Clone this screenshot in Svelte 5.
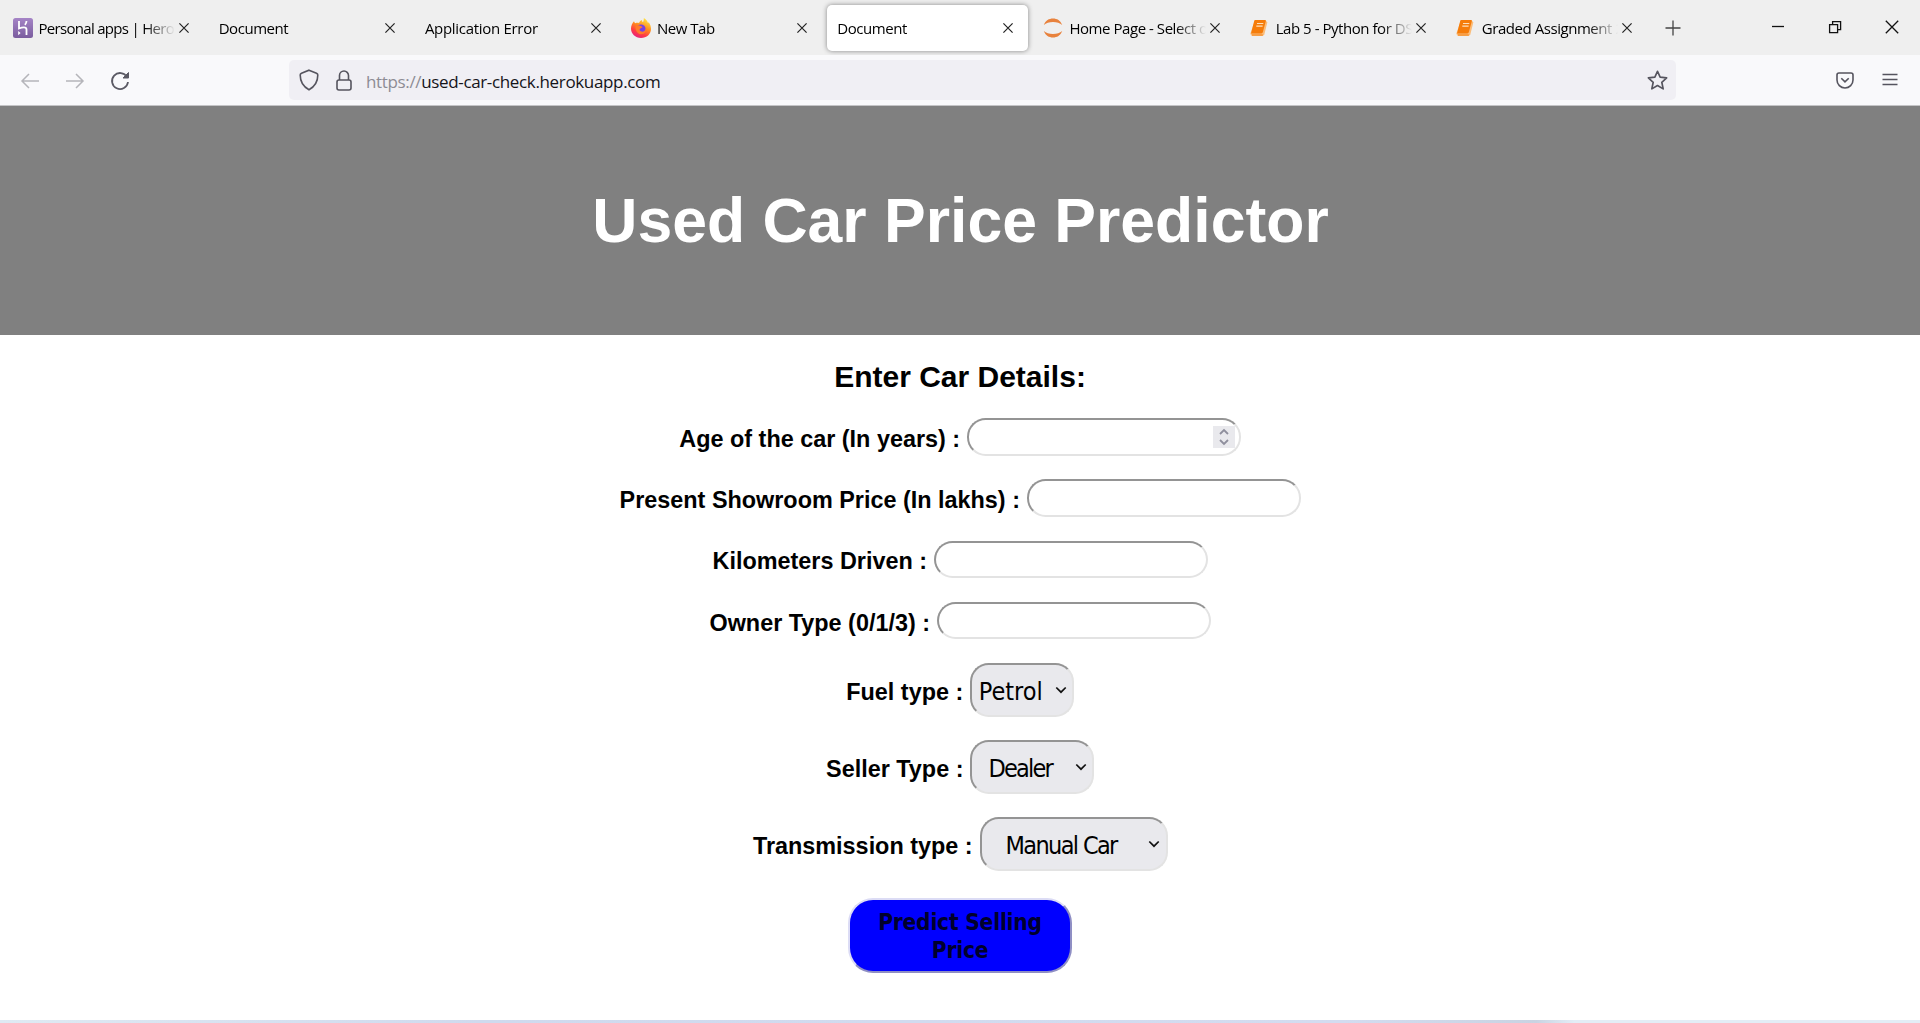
<script>
  const tabs = [
    { title: 'Personal apps | Heroku', icon: 'heroku', fit: 'tight' },
    { title: 'Document' },
    { title: 'Application Error', fit: 'loose' },
    { title: 'New Tab', icon: 'firefox', fit: 'wide' },
    { title: 'Document', active: true },
    { title: 'Home Page - Select or', icon: 'jupyter' },
    { title: 'Lab 5 - Python for DS', icon: 'book' },
    { title: 'Graded Assignment 2', icon: 'book' },
  ];

  const inputs = [
    { label: 'Age of the car (In years) :', spinner: true },
    { label: 'Present Showroom Price (In lakhs) :' },
    { label: 'Kilometers Driven :' },
    { label: 'Owner Type (0/1/3) :' },
  ];

  const selects = [
    { label: 'Fuel type :', value: 'Petrol', size: 'small' },
    { label: 'Seller Type :', value: 'Dealer', size: 'medium' },
    { label: 'Transmission type :', value: 'Manual Car', size: 'large' },
  ];
</script>

<div class="window">
  <div class="tabbar">
    <div class="tabs">
      {#each tabs as tab}
        <div class="tab" class:active={tab.active}>
          {#if tab.icon === 'heroku'}
            <svg class="fav" viewBox="0 0 20 20">
              <defs>
                <linearGradient id="hk" x1="0" y1="0" x2="0" y2="1">
                  <stop offset="0" stop-color="#a584c6" />
                  <stop offset="1" stop-color="#7a5c9e" />
                </linearGradient>
              </defs>
              <rect width="20" height="20" rx="2.5" fill="url(#hk)" />
              <path d="M6 3v7.500c3-1.200 7.500-2 7.500 1V17M13.500 3c0 1.700-.6 2.700-1.600 3.800" fill="none" stroke="#fff" stroke-width="1.800" />
              <path d="M5.200 13v4.200L7.600 15z" fill="#fff" />
            </svg>
          {:else if tab.icon === 'firefox'}
            <svg class="fav" viewBox="0 0 20 20">
              <defs>
                <linearGradient id="fx" x1=".8" y1="0" x2=".3" y2="1">
                  <stop offset="0" stop-color="#fff04a" />
                  <stop offset=".45" stop-color="#ff8a1f" />
                  <stop offset=".75" stop-color="#ff3b45" />
                  <stop offset="1" stop-color="#e5207f" />
                </linearGradient>
              </defs>
              <path d="M3 3.200c.2 1 .7 1.600 1.400 2C5.500 4.700 6.800 4.700 8 5c.5-1.500 1.700-2.600 3-3-.2 1 .2 1.600 1 2.200C12.600 2.800 13 1.500 12.800 0c2.200 1.300 3.600 3 4.200 5l.8-.7C19.300 6.500 20 8.500 20 11c0 5-4.300 9-10 9S0 15.800 0 10.600C0 7.600 1.300 5 3 3.200z" fill="url(#fx)" />
              <circle cx="10" cy="11" r="4.600" fill="#7542e5" />
              <path d="M4.500 8c2-1.200 4-1 5 0 1.300.4 2 .8 2 1.300-.6.900-2 .8-2.700 1.800-.6 1 .3 2.600 2.400 2.600 2 0 3.300-1.500 3.600-3.400 1 2.700-1 6-4.600 6C7 16.300 4 13 4.500 8z" fill="#ff7a2a" />
            </svg>
          {:else if tab.icon === 'jupyter'}
            <svg class="fav" viewBox="0 0 20 20">
              <path d="M.8 7C2.500 2.500 6 .5 10 .5S17.500 2.500 19.200 7C17 4.900 13.800 4 10 4S3 4.900.8 7z" fill="#e8823d" />
              <path d="M.8 13c1.700 4.500 5.200 6.500 9.200 6.500s7.500-2 9.200-6.500C17 15.100 13.800 16 10 16S3 15.100.8 13z" fill="#e8823d" />
            </svg>
          {:else if tab.icon === 'book'}
            <svg class="fav" viewBox="0 0 20 20">
              <path d="M5 2h10.500L17.300 4.500 14.300 16.500 12.800 18H1.800L.3 15.800z" fill="#fbbd7a" />
              <path d="M5.600 2h9.200c.8 0 1.200.6 1 1.300l-3 11c-.2.700-.7 1.100-1.400 1.100H1L4.200 3c.2-.7.600-1 1.400-1z" fill="#f57c0a" />
              <path d="M7 5.500h6.300M6.300 8.200h6.300" stroke="#fde0bd" stroke-width="1.200" />
              <path d="M2 17h10.800" stroke="#f58a22" stroke-width="1.200" />
            </svg>
          {/if}
          <span class="title {tab.fit ?? ''}">{tab.title}</span>
          <svg class="close" viewBox="0 0 10 10"><path d="M.4.4l9.200 9.200M9.600.4L.4 9.600" /></svg>
        </div>
      {/each}
      <svg class="plus" viewBox="0 0 16 16"><path d="M8 .5v15M.5 8h15" /></svg>
    </div>
    <div class="controls">
      <svg viewBox="0 0 14 14"><path d="M1 6.500h12" /></svg>
      <svg viewBox="0 0 14 14"><path d="M1.600 4.600h8v8h-8zM4.600 4.600v-3h8v8h-3" /></svg>
      <svg viewBox="0 0 14 14"><path d="M.8.800l12.400 12.400M13.200.800L.8 13.200" /></svg>
    </div>
  </div>

  <div class="toolbar">
    <div class="nav">
      <svg class="dim" viewBox="0 0 20 20"><path d="M19 10H2M9 3L2 10l7 7" /></svg>
      <svg class="dim" viewBox="0 0 20 20"><path d="M1 10h17M11 3l7 7-7 7" /></svg>
      <svg viewBox="0 0 20 20"><path d="M17 6A8 8 0 1 0 18 11" /><path d="M18.500 1.500v5.500h-5.500z" class="solid" /></svg>
    </div>
    <div class="url">
      <svg class="ico" viewBox="0 0 20 22"><path d="M10 1.200l7.500 3c.9.400 1.300 1 1.300 1.900 0 6.500-2.800 11.500-8.800 14.700C4 17.600 1.200 12.600 1.200 6.100c0-.9.400-1.500 1.300-1.900z" /></svg>
      <svg class="ico lock" viewBox="0 0 16 21"><rect x="1" y="10" width="14" height="10" rx="2" /><path d="M3.500 10V5.500a4.500 4.500 0 0 1 9 0V10" /></svg>
      <span class="address"><span class="scheme">https://</span>used-car-check.herokuapp.com</span>
      <svg class="ico star" viewBox="0 0 20 20"><path d="M10 1.200l2.500 5.600 6.200.7-4.600 4.200 1.300 6.300-5.400-3.200L4.600 18l1.300-6.300L1.300 7.500l6.200-.7z" /></svg>
    </div>
    <div class="menu">
      <svg viewBox="0 0 18 17"><path d="M3 1h12a2 2 0 0 1 2 2v5a8 8 0 0 1-16 0V3a2 2 0 0 1 2-2zM5.300 6.200L9 9.800l3.700-3.600" /></svg>
      <svg viewBox="0 0 18 17"><path d="M1.500 2.500h15M1.500 7.500h15M1.500 12.500h15" /></svg>
    </div>
  </div>

  <header><h1>Used Car Price Predictor</h1></header>

  <main>
    <h2>Enter Car Details:</h2>
    {#each inputs as field}
      <label class="row">
        <span>{field.label}</span>
        <span class="input">
          {#if field.spinner}
            <svg class="spinner" viewBox="0 0 22 22"><path d="M7 8l4-4 4 4M7 14l4 4 4-4" /></svg>
          {/if}
        </span>
      </label>
    {/each}
    {#each selects as field}
      <div class="row tall">
        <span>{field.label}</span>
        <div class="select {field.size}">
          <span class="value">{field.value}</span>
          <svg viewBox="0 0 12 8"><path d="M1.300 1.500L6 6.200l4.700-4.700" /></svg>
        </div>
      </div>
    {/each}
    <button><span>Predict Selling Price</span></button>
  </main>
  <div class="edge"></div>
</div>

<style>
  :global(body) { margin: 0; overflow: hidden; }
  .window {
    width: 1920px; height: 1023px; display: flex; flex-direction: column;
    background: #fff; font-family: "Liberation Sans", Arial, sans-serif; color: #000;
    overflow: hidden;
  }
  svg { display: block; flex: none; fill: none; }
  .tabbar {
    height: 55px; flex: none; background: #efefef; display: flex;
    justify-content: space-between; box-sizing: border-box; padding: 5px 21px 5px 2px;
    font-family: "Open Sans", "Noto Sans", sans-serif; font-size: 15px;
  }
  .tabs { display: flex; align-items: center; gap: 5px; }
  .tab {
    width: 201.200px; height: 46px; box-sizing: border-box; padding: 0 14.500px 0 10.500px;
    display: flex; align-items: center; border-radius: 5px;
  }
  .active { background: #fff; box-shadow: 0 0 5px rgba(0, 0, 0, .45); }
  .fav { width: 20px; height: 20px; margin-right: 6px; }
  .title {
    flex: 1; min-width: 0; overflow: hidden; white-space: nowrap; letter-spacing: -.45px;
    padding-top: 1px; mask-image: linear-gradient(to left, transparent 0, #000 30px);
  }
  .tight { letter-spacing: -.7px; }
  .loose { letter-spacing: -.3px; }
  .wide { letter-spacing: -.5px; }
  .close { width: 10px; height: 10px; stroke: #222; stroke-width: 1.200; margin-left: 4px; }
  .plus { width: 16px; height: 16px; stroke: #444; stroke-width: 1.300; margin-left: 13px; }
  .controls { display: flex; align-items: center; gap: 43px; height: 44px; }
  .controls svg { width: 14px; height: 14px; stroke: #111; stroke-width: 1.300; }
  .toolbar {
    height: 51px; flex: none; background: #f9f9fb; display: flex; align-items: center;
    box-sizing: border-box; border-bottom: 1px solid #c4c4c6; padding: 0 21px 0 20px;
  }
  .nav { display: flex; gap: 25px; width: 269px; padding-top: 1px; }
  .nav svg { width: 20px; height: 20px; stroke: #5b5a64; stroke-width: 1.800; }
  .nav .dim { stroke: #b5b5ba; stroke-width: 1.500; }
  .nav .solid { fill: #5b5a64; stroke-width: 1; }
  .url {
    width: 1387px; height: 40px; border-radius: 5px; background: #f0eff4; display: flex;
    align-items: center; box-sizing: border-box; padding: 0 8px 0 10px;
  }
  .ico { stroke: #55545e; stroke-width: 1.600; width: 20px; height: 22px; }
  .lock { width: 16px; height: 21px; margin-left: 17px; }
  .star { width: 21px; height: 21px; margin-left: auto; stroke-linejoin: round; }
  .address {
    margin-left: 14px; padding-top: 3px; color: #15141a; white-space: nowrap;
    font: 17px "Open Sans", "Noto Sans", sans-serif; letter-spacing: -.35px;
  }
  .scheme { color: #8d8c94; }
  .menu { display: flex; gap: 27px; margin-left: auto; }
  .menu svg { width: 18px; height: 17px; stroke: #55545e; stroke-width: 1.600; }
  header {
    height: 229px; flex: none; background: #808080; color: #fff; display: flex;
    align-items: center; justify-content: center;
  }
  h1 { margin: 0 0 2px 1px; font-size: 62.500px; line-height: 72px; }
  main { display: flex; flex-direction: column; align-items: center; }
  h2 { margin: 24px 0 24px; font-size: 30px; line-height: 35px; }
  .row {
    height: 37.500px; margin-bottom: 23.800px; display: flex; align-items: center;
    gap: 7px; font-size: 23.400px; font-weight: bold; white-space: nowrap; padding-left: .5px;
  }
  .row > span:first-child { padding-top: 5px; }
  .input {
    width: 274px; height: 37.500px; box-sizing: border-box; border: 2px solid;
    border-color: #949494 #e3e3e3 #e3e3e3 #949494; border-radius: 18.700px;
    display: flex; align-items: center; justify-content: flex-end;
  }
  .spinner { width: 22px; height: 22px; background: #e9e9ed; stroke: #8f8f9d; stroke-width: 1.800; margin-right: 4px; }
  .tall { height: 54px; margin-bottom: 23px; }
  .tall > span:first-child { padding-top: 4px; }
  .select {
    height: 54px; box-sizing: border-box; display: flex; align-items: center;
    background: #e9e9ed; border: 2px solid; border-color: #949494 #e3e3e3 #e3e3e3 #949494;
    border-radius: 18.700px; padding-right: 5.500px; justify-content: space-between;
    font: 25px "DejaVu Sans Condensed", "DejaVu Sans", sans-serif;
  }
  .value { padding-top: 2px; }
  .select svg { width: 12px; height: 8px; stroke: #111; stroke-width: 1.700; }
  .small { width: 104px; padding-left: 6.500px; letter-spacing: 0; }
  .medium { width: 124px; padding-left: 16px; letter-spacing: -1.800px; }
  .large { width: 188px; padding-left: 24px; letter-spacing: -1.650px; }
  button {
    margin-top: 4px; width: 224px; height: 75px; box-sizing: border-box; padding: 0 20px;
    background: #00f; color: #00002c; border: 2px solid; border-color: #dcdcf5 #8f8fc4 #8f8fc4 #dcdcf5;
    border-radius: 25px; font: bold 22.500px/28px "DejaVu Sans Condensed", "DejaVu Sans", sans-serif;
    letter-spacing: -.2px;
  }
  .edge {
    height: 3px; margin-top: auto; flex: none;
    background: linear-gradient(to right, #dfeaf3, #cfdaee 25%, #d3dcf0 70%, #c9d3e2 80%, #e3edf6 82%);
  }
</style>
